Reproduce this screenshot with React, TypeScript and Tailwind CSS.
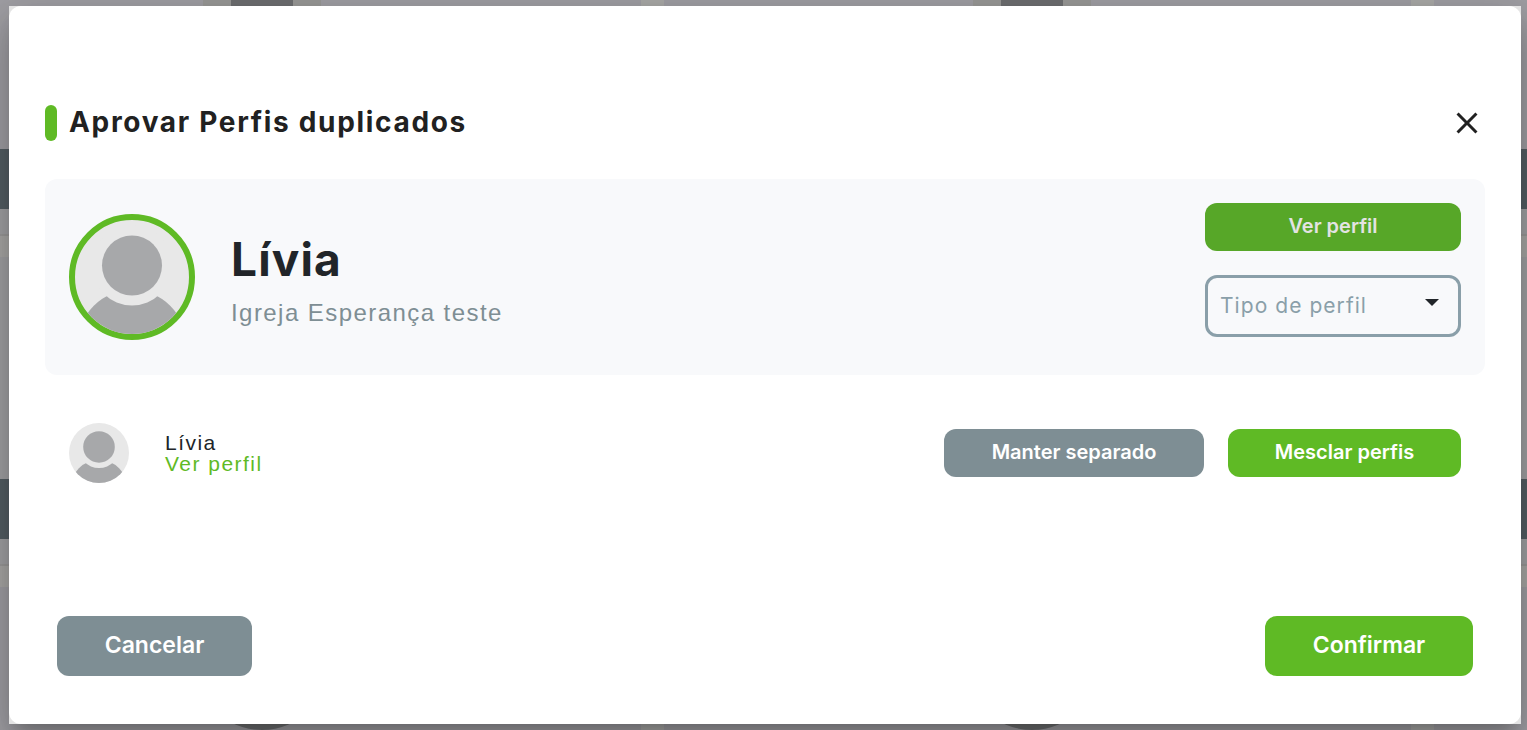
import React from 'react';
import { clsx } from 'clsx';

interface AvatarProps {
  className?: string;
}

const Avatar: React.FC<AvatarProps> = ({ className }) => (
  <div className={clsx('shrink-0 overflow-hidden rounded-full bg-[#e8e8e8]', className)}>
    <svg viewBox="0 0 114 114" className="block h-full w-full" aria-hidden="true">
      <circle cx="57" cy="124" r="54" fill="#a7a8aa" />
      <circle cx="57" cy="45.5" r="40" fill="#e8e8e8" />
      <circle cx="57" cy="45.5" r="30" fill="#a7a8aa" />
    </svg>
  </div>
);

interface ActionButtonProps {
  label: string;
  className: string;
}

const ActionButton: React.FC<ActionButtonProps> = ({ label, className }) => (
  <button
    type="button"
    className={clsx('flex cursor-pointer items-center justify-center rounded-xl pb-0.5 font-semibold', className)}
  >
    {label}
  </button>
);

// Dimmed list of profile cards behind the dialog
const Backdrop: React.FC = () => (
  <div className="absolute inset-0 flex flex-col overflow-hidden bg-[#a09fa4]" aria-hidden="true">
    <div className="flex h-[149px] shrink-0">
      <div className="w-[203px] shrink-0" />
      <div className="flex w-[118px] shrink-0 justify-center bg-[#999997]">
        <div className="w-[62px] bg-[#6e6f71]" />
      </div>
      <div className="w-80 shrink-0" />
      <div className="w-[23px] shrink-0 bg-[#a9a9a7]" />
      <div className="w-[309px] shrink-0" />
      <div className="flex w-[118px] shrink-0 justify-center bg-[#999997]">
        <div className="w-[62px] bg-[#6e6f71]" />
      </div>
      <div className="w-80 shrink-0" />
      <div className="w-[23px] shrink-0 bg-[#a9a9a7]" />
    </div>
    <div className="h-[60px] shrink-0 bg-[#545e64]" />
    <div className="h-[25px] shrink-0 bg-[#a2a2a4]" />
    <div className="h-[23px] shrink-0 border-t-2 border-[#9b9a99] bg-[#a9a8a6]" />
    <div className="h-[222px] shrink-0 bg-[#a2a2a4]" />
    <div className="h-[60px] shrink-0 bg-[#545e64]" />
    <div className="h-[25px] shrink-0 bg-[#a2a2a4]" />
    <div className="h-[23px] shrink-0 border-t-2 border-[#9b9a99] bg-[#a9a8a6]" />
    <div className="flex flex-1 items-end">
      <div className="w-[194px] shrink-0" />
      <div className="size-[136px] shrink-0 rounded-full bg-[#6e6f71]" />
      <div className="w-[311px] shrink-0" />
      <div className="w-[23px] shrink-0 self-stretch bg-[#a9a9a7]" />
      <div className="w-[300px] shrink-0" />
      <div className="size-[136px] shrink-0 rounded-full bg-[#6e6f71]" />
      <div className="w-[311px] shrink-0" />
      <div className="w-[23px] shrink-0 self-stretch bg-[#a9a9a7]" />
    </div>
  </div>
);

const App: React.FC = () => {
  return (
    <div className="relative flex min-h-screen flex-col py-1.5 pr-1.5 pl-[9px] font-['Inter',sans-serif] text-[#212529]">
      <Backdrop />

      <div className="relative flex flex-1 flex-col bg-[#e4e4e4] shadow-[0_11px_15px_-7px_rgba(0,0,0,0.2),0_24px_38px_3px_rgba(0,0,0,0.14),0_9px_46px_8px_rgba(0,0,0,0.12)]">
        <div
          role="dialog"
          aria-labelledby="dialog-title"
          className="flex flex-1 flex-col rounded-xl bg-white px-9 pt-[99px] pb-12"
        >
          {/* Title */}
          <header className="flex items-center justify-between">
            <div className="flex items-center gap-3">
              <div className="h-9 w-3 rounded-full bg-[#5fba25]" />
              <h2 id="dialog-title" className="pb-0.5 text-[28px] leading-8 font-bold tracking-[0.06em] text-[#212121]">
                Aprovar Perfis duplicados
              </h2>
            </div>
            <button type="button" aria-label="Fechar" className="cursor-pointer">
              <svg viewBox="0 0 24 24" className="size-9" fill="#212121">
                <path d="M19 6.41 17.59 5 12 10.59 6.41 5 5 6.41 10.59 12 5 17.59 6.41 19 12 13.41 17.59 19 19 17.59 13.41 12z" />
              </svg>
            </button>
          </header>

          {/* Main profile */}
          <section className="mt-[38px] flex min-h-[196px] items-center justify-between rounded-xl bg-[#f8f9fb] px-6">
            <div className="flex items-center gap-9">
              <Avatar className="size-[126px] border-6 border-[#5fba25]" />
              <div className="pt-2">
                <h1 className="text-[46px] leading-[52px] font-bold tracking-wide">Lívia</h1>
                <p className="mt-3 font-['Liberation_Sans',sans-serif] text-2xl leading-8 tracking-[0.06em] text-[#7e8e94]">
                  Igreja Esperança teste
                </p>
              </div>
            </div>
            <div className="flex w-64 flex-col gap-6 self-start pt-6">
              <ActionButton label="Ver perfil" className="h-12 bg-[#57a728] text-xl text-[#e3e3e3]" />
              <div className="relative">
                <select
                  aria-label="Tipo de perfil"
                  defaultValue=""
                  className="h-[62px] w-full appearance-none rounded-xl border-3 border-[#8a9fa9] bg-transparent pr-10 pl-3 text-[21px] tracking-wider text-[#8a9fa9]"
                >
                  <option value="">Tipo de perfil</option>
                </select>
                <svg viewBox="0 0 14 7" className="pointer-events-none absolute top-6 right-[22px] h-[7px] w-3.5" fill="#212529">
                  <path d="M0 0h14L7 7z" />
                </svg>
              </div>
            </div>
          </section>

          {/* Possible duplicate */}
          <section className="mt-12 flex items-center justify-between px-6">
            <div className="flex items-center gap-9">
              <Avatar className="size-[60px]" />
              <div className="flex flex-col font-['Liberation_Sans',sans-serif] text-[21px] leading-[21px] tracking-[0.07em]">
                <span>Lívia</span>
                <a href="#perfil" className="text-[#5fba25]">
                  Ver perfil
                </a>
              </div>
            </div>
            <div className="flex gap-6">
              <ActionButton label="Manter separado" className="h-12 w-[260px] bg-[#7e8e94] text-xl text-white" />
              <ActionButton label="Mesclar perfis" className="h-12 w-[233px] bg-[#5fba25] text-xl text-white" />
            </div>
          </section>

          <footer className="mt-auto flex items-center justify-between px-3">
            <ActionButton label="Cancelar" className="h-[60px] w-[195px] bg-[#7e8e94] text-[23px] text-white" />
            <ActionButton label="Confirmar" className="h-[60px] w-52 bg-[#5fba25] text-[23px] text-white" />
          </footer>
        </div>
      </div>
    </div>
  );
};

export default App;
